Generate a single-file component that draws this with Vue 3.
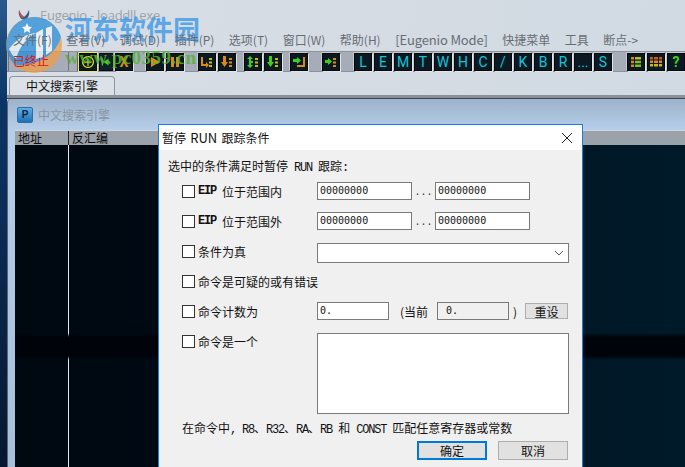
<template>
  <div class="desktop">
    <div class="strip"></div>

    <div class="window">
      <div class="titlebar">
        <svg class="app-icon" width="14" height="14" viewBox="0 0 14 14">
          <path d="M2 2C1 7 3 11 7 12C11 11 13 7 12 2L10 6L7 9L4 6Z" fill="#3d5a86" />
          <path d="M2 2L4 6L7 9L5 10C3 8 2 5 2 2Z" fill="#d8503a" />
        </svg>
        <span class="app-name">Eugenio - loaddll.exe</span>
      </div>

      <div class="menubar">
        <span
          v-for="m in menus"
          :key="m"
          class="menu-item"
          :class="{ wide: m.startsWith('[') }"
        >{{ m }}</span>
      </div>

      <div class="toolbar">
        <div class="status">已终止</div>
        <div class="grip"></div>
        <div
          v-for="(group, i) in toolGroups"
          :key="i"
          class="tool-group"
          :class="group.gap"
        >
          <div
            v-for="(b, j) in group.items"
            :key="j"
            class="tool"
            :class="[b.cls, { ring: b.ring, narrow: b.narrow }]"
          >
            <span v-if="b.text">{{ b.text }}</span>
            <svg v-else width="14" height="14" viewBox="0 0 14 14">
              <path v-for="(p, k) in b.paths" :key="k" :d="p[0]" :fill="p[1]" />
            </svg>
          </div>
        </div>
      </div>

      <div class="tabs">
        <div class="tab">中文搜索引擎</div>
      </div>

      <div class="mdi">
        <div class="child">
          <div class="child-title">
            <span class="child-icon">P</span>
            <span class="child-name">中文搜索引擎</span>
          </div>
          <div class="columns">
            <div class="col-head col-addr">地址</div>
            <div class="col-head col-dis">反汇编</div>
          </div>
          <div class="grid-body">
            <div class="col-line"></div>
            <div class="band"></div>
          </div>
        </div>
      </div>
    </div>

    <!-- watermark sits over the window chrome -->
    <div class="watermark">
      <svg class="wm-logo" width="58" height="62" viewBox="0 0 58 62">
        <circle cx="28" cy="30" r="28" fill="#eda04c" />
        <path d="M28 2A28 28 0 0 1 55 22C50 40 30 52 9 50A28 28 0 0 1 28 2Z" fill="#2f8fd8" />
        <path d="M3 34C10 24 20 19 30 18C22 22 14 30 10 44C7 41 5 38 3 34Z" fill="#e6eef5" />
        <path d="M30 18L37 14L37 42L30 44Z" fill="#f1f5f8" />
        <path d="M40 13L46 11L46 36L40 40Z" fill="#f1f5f8" />
        <path d="M21 8L22.500 11.500L26 12L23.500 14.500L24 18L21 16L18 18L18.500 14.500L16 12L19.500 11.500Z" fill="#fff" />
      </svg>
      <div class="wm-text">
        <div class="wm-cn">河东软件园</div>
        <div class="wm-url">www.pc0359.cn</div>
      </div>
    </div>

    <div class="dialog">
      <div class="dlg-title">
        <span>暂停 <span class="title-latin">RUN</span> 跟踪条件</span>
        <svg width="12" height="12" viewBox="0 0 12 12" fill="none" stroke="#222" stroke-width="1">
          <path d="M1 1L11 11M11 1L1 11" />
        </svg>
      </div>

      <div class="dlg-body">
        <div class="intro">选中的条件满足时暂停<span class="mono"> RUN </span>跟踪<span class="mono">:</span></div>

        <div class="rows">
          <div class="row">
            <label class="check"><i class="box"></i><span class="mono eip">EIP</span>位于范围内</label>
            <div class="field w95">00000000</div>
            <span class="dots">...</span>
            <div class="field w95">00000000</div>
          </div>
          <div class="row">
            <label class="check"><i class="box"></i><span class="mono eip">EIP</span>位于范围外</label>
            <div class="field w95">00000000</div>
            <span class="dots">...</span>
            <div class="field w95">00000000</div>
          </div>
          <div class="row row-combo">
            <label class="check"><i class="box"></i>条件为真</label>
            <div class="field combo">
              <svg width="10" height="6" viewBox="0 0 10 6" fill="none" stroke="#555" stroke-width="1">
                <path d="M1 1L5 5L9 1" />
              </svg>
            </div>
          </div>
          <div class="row">
            <label class="check"><i class="box"></i>命令是可疑的或有错误</label>
          </div>
          <div class="row row-count">
            <label class="check"><i class="box"></i>命令计数为</label>
            <div class="field w72">0.</div>
            <span class="current">(当前</span>
            <div class="field w72 readonly">0.</div>
            <span class="paren">)</span>
            <div class="reset">重设</div>
          </div>
          <div class="row row-area">
            <label class="check"><i class="box"></i>命令是一个</label>
            <div class="field area"></div>
          </div>
        </div>

        <div class="note">在命令中<span class="mono">, R8</span>、<span class="mono">R32</span>、<span class="mono">RA</span>、<span class="mono">RB </span>和<span class="mono"> CONST </span>匹配任意寄存器或常数</div>

        <div class="actions">
          <div class="btn primary">确定</div>
          <div class="btn">取消</div>
        </div>
      </div>
    </div>
  </div>
</template>

<script setup>
const menus = ['文件(F)', '查看(V)', '调试(D)', '插件(P)', '选项(T)', '窗口(W)', '帮助(H)', '[Eugenio Mode]', '快捷菜单', '工具', '断点->']

const OR = '#d98a12'
const GR = '#3ecf1e'
const YE = '#c8b81e'

const dots = c => [['M9 3h3v2h-3zM9 6.500h3v2h-3zM9 10h3v2h-3z', c]]

const letters = ['L', 'E', 'M', 'T', 'W', 'H', 'C', '/', 'K', 'B', 'R', '...', 'S']

const toolGroups = [
  {
    gap: 'gap-1',
    items: [
      { ring: true, paths: [['M7 1a6 6 0 1 0 .01 0zM7 2.200a4.800 4.800 0 1 1-.01 0z', '#e8e81c'], ['M6.400 3.500h1.200v3h3v1.200h-3v3h-1.200v-3h-3v-1.200h3z', '#e8e81c']] },
      { narrow: true, paths: [['M2 3h1.500v8H2zM10 3v8L4 7z', GR]] },
      { text: 'X', cls: 'orange' }
    ]
  },
  {
    gap: 'gap-13',
    items: [
      { paths: [['M3 2L12 7L3 12Z', OR]] },
      { paths: [['M3 2h3v10H3zM8 2h3v10H8z', OR]] }
    ]
  },
  {
    gap: 'gap-14',
    items: [
      { paths: [['M1 2h2v7h3V7l3 3-3 3v-2H1z', OR], ...dots(YE)] },
      { paths: [['M3 1h3v6h2l-3.500 5L1 7h2z', OR], ...dots(OR)] }
    ]
  },
  {
    gap: 'gap-8',
    items: [
      { paths: [['M4 1l3 3H5v2h2v2H5v2h2l-3 3-3-3h2V4H1z', GR], ...dots(YE)] },
      { paths: [['M3 1h3v6h2l-3.500 5L1 7h2z', GR], ...dots(YE)] }
    ]
  },
  {
    gap: 'gap-8',
    items: [{ paths: [['M1 4h4V2l4 3.500L5 9V7H1z', GR], ['M11 2h2v10H5v-2h6z', OR]] }]
  },
  {
    gap: 'gap-14',
    items: [{ paths: [['M1 5h3V3l4 3.500L4 10V8H1z', GR], ...dots(OR)] }]
  },
  {
    gap: 'gap-14',
    items: letters.map(text => ({ text, cls: 'cyan' }))
  },
  {
    gap: 'gap-15',
    items: [
      { paths: [['M2 2h3v2.500H2zM2 5.800h3v2.500H2zM2 9.500h3V12H2z', OR], ['M6 2h6v2.500H6z', YE], ['M6 5.800h6v2.500H6zM6 9.500h6V12H6z', '#7fbf1c']] },
      { paths: [['M1 2h12v2.500H1z', '#c9561c'], ['M1 5.500h12V8H1z', '#d98a12'], ['M1 9h12v2.500H1z', YE], ['M4 2h1v10H4zM9 2h1v10H9z', '#161616']] },
      { text: '?', cls: 'green' }
    ]
  }
]
</script>

<style scoped>
.desktop {
  position: relative;
  display: flex;
  width: 685px;
  height: 467px;
  overflow: hidden;
  font-family: "Noto Sans CJK SC", "Liberation Sans", sans-serif;
  font-size: 12px;
  color: #111;
}

.strip {
  width: 7px;
  flex-shrink: 0;
  background: linear-gradient(#2a5a8c 0, #0b3566 100px, #0a2a52 240px, #06182e 100%);
}

.window {
  flex: 1;
  min-width: 0;
  display: flex;
  flex-direction: column;
  background: linear-gradient(100deg, #d9dee5, #d0d9e2);
}

.titlebar {
  height: 30px;
  display: flex;
  align-items: center;
  padding-left: 10px;
  gap: 9px;
  box-sizing: border-box;
}

.app-name {
  font-family: "Open Sans", "Liberation Sans", sans-serif;
  font-size: 13px;
  letter-spacing: -0.25px;
  color: #9ca3ab;
}

.menubar {
  height: 21px;
  display: flex;
  align-items: center;
  padding: 0 0 2px 6px;
  gap: 14.500px;
  box-sizing: border-box;
  color: #676d74;
  white-space: nowrap;
}

/* menu and status text show through the watermark */
.menu-item,
.status {
  position: relative;
  z-index: 2;
}

.menu-item.wide {
  font-size: 13px;
  letter-spacing: -0.15px;
}

.toolbar {
  height: 21px;
  display: flex;
  align-items: center;
  background: #a6adb8;
  border-top: 1px solid #8c929b;
  border-bottom: 1px solid #8c929b;
  box-sizing: border-box;
  white-space: nowrap;
}

.status {
  width: 67px;
  height: 19px;
  padding-left: 4px;
  line-height: 18px;
  color: #e21414;
  box-sizing: border-box;
  border-right: 1px solid #777;
  border-left: 1px solid #777;
  margin-left: 1px;
}

.grip {
  width: 6px;
  height: 19px;
  margin-left: 4px;
  border-right: 1px solid #666;
  box-sizing: border-box;
}

.tool-group {
  display: flex;
  gap: 2px;
  flex-shrink: 0;
}

.gap-1 {
  margin-left: 1px;
}

.gap-8 {
  margin-left: 8px;
}

.gap-13 {
  margin-left: 13px;
}

.gap-14 {
  margin-left: 14px;
}

.gap-15 {
  margin-left: 15px;
}

.tool {
  width: 18px;
  height: 18px;
  display: flex;
  align-items: center;
  justify-content: center;
  box-sizing: border-box;
  background: #0b1a22;
  border: 1px solid #0a0a0a;
  box-shadow: 1px 1px 0 #e3e6e8, -1px -1px 0 #c8ccd0;
  font-family: Roboto, sans-serif;
  font-size: 14px;
  line-height: 1;
}

.tool.narrow {
  width: 14px;
  box-shadow: none;
  background: #11202a;
}

.tool.ring {
  box-shadow: 0 0 0 1px #e8e86a;
}

.cyan {
  color: #12c4dc;
}

.orange {
  color: #d98a12;
  font-weight: 700;
}

.green {
  color: #3ecf1e;
  font-weight: 700;
}

.tabs {
  height: 26px;
  padding: 4px 0 0 2px;
  box-sizing: border-box;
  border-bottom: 3px solid #8a9098;
}

.tab {
  width: 106px;
  height: 19px;
  line-height: 18px;
  text-align: center;
  box-sizing: border-box;
  background: #dce1e7;
  border: 1px solid #8f959c;
  border-bottom: none;
  border-radius: 4px 4px 0 0;
}

.mdi {
  flex: 1;
  min-height: 0;
  display: flex;
  border-top: 1px solid #3c4550;
}

.child {
  flex: 1;
  min-width: 0;
  display: flex;
  flex-direction: column;
  padding-left: 7px;
  border-left: 1px solid #5a636e;
  border-top-left-radius: 4px;
  background: linear-gradient(#9db3cb, #b6cee8 31px, #a8bfd8);
}

.child-title {
  height: 31px;
  display: flex;
  align-items: center;
  gap: 5px;
  padding-left: 2px;
  box-sizing: border-box;
}

.child-icon {
  width: 16px;
  height: 16px;
  display: flex;
  align-items: center;
  justify-content: center;
  border-radius: 2px;
  border: 1px solid #2c6ca8;
  box-sizing: border-box;
  background: linear-gradient(#5fb0e8, #1f6fb4);
  color: #10243a;
  font-family: "Liberation Sans", sans-serif;
  font-size: 10px;
  font-weight: 700;
}

.child-name {
  color: #8b95a0;
}

.columns {
  height: 15px;
  display: flex;
  background: #9ca2aa;
  border-top: 1px solid #cdd6df;
  box-sizing: border-box;
}

.col-head {
  line-height: 14px;
  padding-left: 3px;
  box-sizing: border-box;
  color: #0c0c0c;
}

.col-addr {
  width: 54px;
  border-right: 1px solid #222;
}

.col-dis {
  flex: 1;
}

.grid-body {
  position: relative;
  flex: 1;
  background: linear-gradient(90deg, #000810, #000a14 23%, #00141f 60%, #001a2a);
}

.col-line {
  position: absolute;
  left: 53px;
  top: 0;
  bottom: 0;
  width: 1px;
  background: #e4e8ec;
}

.band {
  position: absolute;
  left: 0;
  right: 0;
  top: 188px;
  height: 27px;
  background: linear-gradient(rgba(0, 4, 10, 0), #00040a 15%, #00040a 85%, rgba(0, 4, 10, 0));
}

.watermark {
  position: absolute;
  left: 6px;
  top: 15px;
  z-index: 1;
  display: flex;
  pointer-events: none;
}

.wm-logo {
  opacity: 0.78;
}

.wm-text {
  margin: -1px 0 0 1px;
}

.wm-cn {
  font-size: 27px;
  font-weight: 700;
  line-height: 30px;
  color: rgba(45, 145, 232, 0.72);
  white-space: nowrap;
}

.wm-url {
  margin-top: 5px;
  font-family: "Liberation Serif", serif;
  font-size: 19px;
  font-weight: 700;
  line-height: 18px;
  letter-spacing: 0.45px;
  color: rgba(84, 178, 54, 0.85);
  white-space: nowrap;
}

.dialog {
  position: absolute;
  left: 158px;
  top: 124px;
  width: 425px;
  height: 350px;
  box-sizing: border-box;
  border: 1px solid #1282e0;
  background: #f0f0f0;
}

.dlg-title {
  height: 25px;
  display: flex;
  align-items: center;
  justify-content: space-between;
  padding: 0 9px 0 3px;
  background: #fff;
  word-spacing: 1.500px;
}

.title-latin {
  font-size: 13px;
}

.dlg-body {
  padding: 9px 13px 0 9px;
}

.intro {
  height: 14px;
  line-height: 14px;
  white-space: pre;
}

.mono {
  font-family: "Liberation Mono", monospace;
  font-size: 12px;
  letter-spacing: -1.2px;
  white-space: pre;
}

.rows {
  display: flex;
  flex-direction: column;
  gap: 12px;
  margin-top: 9px;
  padding-left: 14px;
}

.row {
  display: flex;
  align-items: center;
  height: 18px;
}

.row-combo {
  height: 20px;
  margin-top: 1px;
  margin-bottom: -3px;
}

.row-combo .check {
  margin-top: -4px;
}

.row-count {
  margin-bottom: 1px;
}

.row-area {
  align-items: flex-start;
  height: 81px;
}

.check {
  width: 135px;
  flex-shrink: 0;
  display: flex;
  align-items: center;
  white-space: nowrap;
}

.row-area .check {
  height: 16px;
}

.box {
  width: 13px;
  height: 13px;
  margin-right: 3px;
  box-sizing: border-box;
  border: 1px solid #333;
  background: #fff;
  flex-shrink: 0;
}

.eip {
  font-weight: 700;
  margin-right: 6px;
}

.field {
  height: 18px;
  line-height: 16px;
  padding-left: 2px;
  box-sizing: border-box;
  border: 1px solid #7a7a7a;
  background: #fff;
  font-family: "DejaVu Sans Mono", monospace;
  font-size: 10px;
  flex-shrink: 0;
}

.w95 {
  width: 95px;
}

.w72 {
  width: 72px;
}

.dots {
  width: 23px;
  text-align: center;
  padding-top: 3px;
  font-family: "Liberation Mono", monospace;
  font-size: 10px;
  color: #333;
}

.combo {
  width: 252px;
  height: 20px;
  display: flex;
  align-items: center;
  justify-content: flex-end;
  padding-right: 4px;
}

.current {
  margin-left: 11px;
  width: 37px;
  white-space: nowrap;
}

.readonly {
  background: #f0f0f0;
  padding-left: 8px;
}

.paren {
  margin-left: 4px;
  width: 12px;
}

.reset {
  width: 43px;
  height: 16px;
  line-height: 15px;
  text-align: center;
  box-sizing: border-box;
  background: #e1e1e1;
  border: 1px solid #adadad;
}

.area {
  width: 252px;
  height: 81px;
}

.note {
  height: 14px;
  line-height: 14px;
  margin-top: 7px;
  padding-left: 14px;
  white-space: nowrap;
}

.actions {
  display: flex;
  justify-content: flex-end;
  gap: 11px;
  margin-top: 6px;
  padding-right: 1px;
}

.btn {
  width: 70px;
  height: 19px;
  line-height: 17px;
  text-align: center;
  box-sizing: border-box;
  background: #e1e1e1;
  border: 1px solid #adadad;
}

.primary {
  border: 2px solid #0078d7;
  line-height: 15px;
}
</style>
